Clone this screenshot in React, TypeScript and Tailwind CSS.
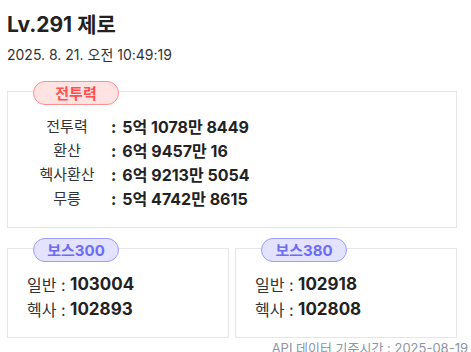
import React from 'react';

const font = { fontFamily: 'Inter, "Noto Sans CJK KR", sans-serif' };

const stats = [
  { label: '전투력', value: '5억 1078만 8449' },
  { label: '환산', value: '6억 9457만 16' },
  { label: '헥사환산', value: '6억 9213만 5054' },
  { label: '무릉', value: '5억 4742만 8615' },
];

const bosses = [
  { name: '보스300', normal: '103004', hexa: '102893' },
  { name: '보스380', normal: '102918', hexa: '102808' },
];

function Badge({ children, tone }: { children: React.ReactNode; tone: 'red' | 'blue' }) {
  const cls =
    tone === 'red'
      ? 'bg-[#ffe3e3] border-[#ff8f8f] text-[#ff4f4f]'
      : 'bg-[#e3e3ff] border-[#9c9cff] text-[#6c6cf5]';
  return (
    <div
      className={`absolute left-[25px] top-[-11px] flex h-[24px] w-[86px] items-center justify-center rounded-full border text-[15px] font-bold leading-none ${cls}`}
    >
      {children}
    </div>
  );
}

export default function App() {
  return (
    <div className="w-[471px] bg-white px-[7px] pt-[13px] text-[#222]" style={font}>
      <h1 className="text-[21px] font-bold leading-[24px]">Lv.291 제로</h1>
      <p className="mt-[8px] text-[14px] leading-[20px] text-[#333]">2025. 8. 21. 오전 10:49:19</p>

      {/* 전투력 카드 */}
      <div className="relative mt-[26px] w-[450px] border border-[#e6e6ea] pt-[23px] pb-[16px]">
        <Badge tone="red">전투력</Badge>
        <div className="flex flex-col">
          {stats.map((s) => (
            <div key={s.label} className="flex h-[24px] items-center">
              <span className="ml-[28px] w-[62px] text-center text-[15px] text-[#333]">{s.label}</span>
              <span className="ml-[13px] text-[16px] font-bold">:</span>
              <span className="ml-[6px] text-[16px] font-bold">{s.value}</span>
            </div>
          ))}
        </div>
      </div>

      {/* 보스 카드 */}
      <div className="mt-[20px] grid w-[450px] grid-cols-2 gap-[6px]">
        {bosses.map((b) => (
          <div key={b.name} className="relative h-[90px] border border-[#e6e6ea] pl-[19px] pt-[23px]">
            <Badge tone="blue">{b.name}</Badge>
            <div className="flex h-[25px] items-center text-[16px]">
              <span className="text-[#333]">일반 :&nbsp;</span>
              <span className="text-[17px] font-bold">{b.normal}</span>
            </div>
            <div className="flex h-[25px] items-center text-[16px]">
              <span className="text-[#333]">헥사 :&nbsp;</span>
              <span className="text-[17px] font-bold">{b.hexa}</span>
            </div>
          </div>
        ))}
      </div>

      <div className="mt-[1px] mr-[-4px] text-right text-[13px] leading-[18px] text-[#8c95a6]">
        API 데이터 기준시간 : 2025-08-19
      </div>
    </div>
  );
}
